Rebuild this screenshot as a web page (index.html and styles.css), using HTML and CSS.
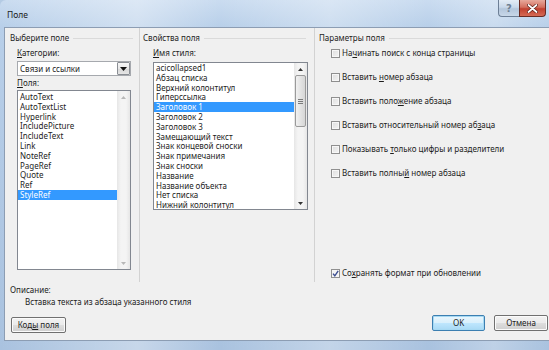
FILE: index.html
```html
<!DOCTYPE html>
<html lang="ru">
<head>
<meta charset="utf-8">
<title>Поле</title>
<link rel="stylesheet" href="styles.css">
</head>
<body>
<div class="window">
  <div class="titlebar">
    <span class="title">Поле</span>
    <div class="caption">
      <div class="cap-btn cap-help">?</div>
      <div class="cap-btn cap-close">
        <svg width="11" height="9" viewBox="0 0 11 9"><path d="M1.5 1 L9.5 8 M9.5 1 L1.5 8" stroke="#5a1a12" stroke-width="3.2" stroke-linecap="round"/><path d="M1.5 1 L9.5 8 M9.5 1 L1.5 8" stroke="#fff" stroke-width="1.8" stroke-linecap="round"/></svg>
      </div>
    </div>
  </div>
  <div class="client">
    <div class="columns">
      <section class="col col-left">
        <div class="group-title">Выберите поле</div>
        <div class="label"><u>К</u>атегории:</div>
        <div class="select">
          <span class="select-text">Связи и ссылки</span>
          <span class="select-btn"><svg width="7" height="4" viewBox="0 0 7 4"><path d="M0 0 H7 L3.5 4 Z" fill="#111"/></svg></span>
        </div>
        <div class="label label-gap"><u>П</u>оля:</div>
        <div class="list list-fields">
          <div class="items">
            <div class="item">AutoText</div>
            <div class="item">AutoTextList</div>
            <div class="item">Hyperlink</div>
            <div class="item">IncludePicture</div>
            <div class="item">IncludeText</div>
            <div class="item">Link</div>
            <div class="item">NoteRef</div>
            <div class="item">PageRef</div>
            <div class="item">Quote</div>
            <div class="item">Ref</div>
            <div class="item selected">StyleRef</div>
          </div>
          <div class="scrollbar disabled">
            <span class="arrow"><svg width="5" height="3" viewBox="0 0 5 3"><path d="M0 3 L2.5 0 L5 3 Z" fill="#b8b8b8"/></svg></span>
            <span class="track"></span>
            <span class="arrow"><svg width="5" height="3" viewBox="0 0 5 3"><path d="M0 0 L2.5 3 L5 0 Z" fill="#b8b8b8"/></svg></span>
          </div>
        </div>
      </section>
      <section class="col col-mid">
        <div class="group-title">Свойства поля</div>
        <div class="label label-mid"><u>И</u>мя стиля:</div>
        <div class="list list-styles">
          <div class="items">
            <div class="item">acicollapsed1</div>
            <div class="item">Абзац списка</div>
            <div class="item">Верхний колонтитул</div>
            <div class="item">Гиперссылка</div>
            <div class="item selected">Заголовок 1</div>
            <div class="item">Заголовок 2</div>
            <div class="item">Заголовок 3</div>
            <div class="item">Замещающий текст</div>
            <div class="item">Знак концевой сноски</div>
            <div class="item">Знак примечания</div>
            <div class="item">Знак сноски</div>
            <div class="item">Название</div>
            <div class="item">Название объекта</div>
            <div class="item">Нет списка</div>
            <div class="item">Нижний колонтитул</div>
          </div>
          <div class="scrollbar">
            <span class="arrow"><svg width="5" height="3" viewBox="0 0 5 3"><path d="M0 3 L2.5 0 L5 3 Z" fill="#333"/></svg></span>
            <span class="track">
              <span class="thumb"><span class="grip"></span></span>
            </span>
            <span class="arrow"><svg width="5" height="3" viewBox="0 0 5 3"><path d="M0 0 L2.5 3 L5 0 Z" fill="#333"/></svg></span>
          </div>
        </div>
      </section>
      <section class="col col-right">
        <div class="group-title">Параметры поля</div>
        <div class="options">
          <div class="check"><span class="box"></span><span>На<u>ч</u>инать поиск с конца страницы</span></div>
          <div class="check"><span class="box"></span><span>Вставить <u>н</u>омер абзаца</span></div>
          <div class="check"><span class="box"></span><span>Вставить поло<u>ж</u>ение абзаца</span></div>
          <div class="check"><span class="box"></span><span>Вставить относительный номер аб<u>з</u>аца</span></div>
          <div class="check"><span class="box"></span><span>Показывать <u>т</u>олько цифры и разделители</span></div>
          <div class="check"><span class="box"></span><span>Вставить полны<u>й</u> номер абзаца</span></div>
        </div>
        <div class="check check-last"><span class="box checked"><svg width="7" height="7" viewBox="0 0 7 7"><path d="M1 3.6 L2.8 5.8 L6.2 0.8" fill="none" stroke="#3d4f92" stroke-width="1.4"/></svg></span><span>Со<u>х</u>ранять формат при обновлении</span></div>
      </section>
    </div>
    <div class="desc-label">Описание:</div>
    <div class="desc-text">Вставка текста из абзаца указанного стиля</div>
    <div class="footer">
      <button class="btn btn-codes">Код<u>ы</u> поля</button>
      <div class="footer-right">
        <button class="btn btn-default">OK</button>
        <button class="btn">Отмена</button>
      </div>
    </div>
  </div>
</div>
</body>
</html>
```

FILE: styles.css
```css
* { box-sizing: border-box; }
html, body { margin: 0; padding: 0; }
body {
  width: 549px;
  height: 350px;
  overflow: hidden;
  font-family: "Noto Sans", "Open Sans", sans-serif;
  font-size: 8px;
  color: #1c1c1c;
  background: #b4cbe4;
}
u { text-decoration-thickness: 1px; text-underline-offset: 1px; }

.window {
  height: 350px;
  display: flex;
  flex-direction: column;
  padding: 0 0 9px 4px;
  background:
    linear-gradient(90deg, rgba(255,255,255,0) 0, rgba(255,255,255,0.35) 25%, rgba(255,255,255,0) 40%, rgba(255,255,255,0.3) 60%, rgba(255,255,255,0) 78%, rgba(255,255,255,0.25) 90%, rgba(255,255,255,0) 100%),
    linear-gradient(180deg, #cadcf0 0, #b8cfe9 27px, #a9c2df 100%);
  border-top-left-radius: 6px;
}

.titlebar {
  height: 27px;
  display: flex;
  align-items: flex-start;
}
.title {
  margin: 10px 0 0 3px;
  line-height: 10px;
  font-size: 8.5px;
  color: #1a1a1a;
}
.caption {
  margin-left: auto;
  margin-right: 3px;
  display: flex;
}
.cap-btn {
  height: 17px;
  border: 1px solid #6d7f96;
  border-top: none;
  display: flex;
  align-items: center;
  justify-content: center;
}
.cap-help {
  width: 21px;
  border-bottom-left-radius: 4px;
  border-right: none;
  background: linear-gradient(180deg, #e3ecf6 0, #c9d8ea 45%, #b3c6dc 55%, #c8d7e8 100%);
  color: #6e7f93;
  font-family: "DejaVu Sans", sans-serif;
  font-weight: bold;
  font-size: 10px;
}
.cap-close {
  width: 27px;
  border-bottom-right-radius: 4px;
  border-color: #6a2a22;
  background: linear-gradient(180deg, #e7a99c 0, #d4705f 45%, #c1402f 55%, #d56a55 100%);
}

.client {
  flex: 1;
  background: #f0f0f0;
  border: 1px solid #8c9db3;
  border-right: none;
  display: flex;
  flex-direction: column;
}

.columns {
  height: 254px;
  display: flex;
}
.col {
  display: flex;
  flex-direction: column;
  padding-top: 5px;
}
.col-left {
  width: 135px;
  padding-left: 5px;
  border-right: 1px solid #d2d2d2;
}
.col-mid {
  width: 175px;
  padding-left: 3px;
  border-right: 1px solid #d2d2d2;
}
.col-right {
  flex: 1;
  padding-left: 4px;
  padding-bottom: 4px;
}

.group-title {
  display: flex;
  align-items: center;
  gap: 4px;
  line-height: 10px;
  height: 10px;
  white-space: nowrap;
}
.group-title::after {
  content: "";
  flex: 1;
  height: 1px;
  margin-top: 1px;
  background: #dadada;
}
.col-left .group-title { margin-right: 6px; }
.col-mid .group-title { margin-right: 8px; }
.col-right .group-title { margin-right: 8px; }

.label {
  line-height: 10px;
  margin: 5px 0 0 7px;
}
.label-gap { margin-top: 2px; }
.label-mid { margin-left: 10px; }

.select {
  margin: 3px 0 0 7px;
  width: 114px;
  height: 15px;
  background: #fff;
  border: 1px solid #a6a9ae;
  display: flex;
  align-items: center;
}
.select-text {
  flex: 1;
  padding-left: 2px;
  line-height: 10px;
}
.select-btn {
  width: 13px;
  height: 13px;
  border: 1px solid #8a8e94;
  border-radius: 1px;
  background: linear-gradient(180deg, #f6f6f6 0, #e8e8e8 50%, #d8d8d8 51%, #e4e4e4 100%);
  display: flex;
  align-items: center;
  justify-content: center;
}

.list {
  background: #fff;
  border: 1px solid #828790;
  display: flex;
  overflow: hidden;
}
.list-fields {
  margin: 2px 0 0 7px;
  width: 114px;
  height: 180px;
}
.list-styles {
  margin: 4px 0 0 10px;
  width: 155px;
  height: 148px;
}
.items {
  flex: 1;
  min-width: 0;
  padding-top: 1px;
}
.list-styles .items { padding-top: 0; }
.item {
  line-height: 9.8px;
  height: 9.8px;
  padding-left: 2px;
  white-space: nowrap;
}
.item.selected {
  background: #3399ff;
  color: #fff;
}

.scrollbar {
  width: 13px;
  display: flex;
  flex-direction: column;
  background: linear-gradient(90deg, #e6e6e6 0, #f4f4f4 30%, #f4f4f4 70%, #e6e6e6 100%);
}
.scrollbar .arrow {
  height: 12px;
  display: flex;
  align-items: center;
  justify-content: center;
}
.scrollbar .track {
  flex: 1;
  display: flex;
  flex-direction: column;
}
.thumb {
  margin: 0 1px 0 1px;
  height: 52px;
  border: 1px solid #9a9a9a;
  border-radius: 2px;
  background: linear-gradient(90deg, #f1f1f1 0, #e3e3e3 50%, #d6d6d6 100%);
  display: flex;
  align-items: center;
  justify-content: center;
}
.grip {
  width: 5px;
  height: 5px;
  border-top: 1px solid #7a7a7a;
  border-bottom: 1px solid #7a7a7a;
  position: relative;
}
.grip::after {
  content: "";
  position: absolute;
  left: 0;
  right: 0;
  top: 1px;
  height: 1px;
  background: #7a7a7a;
}

.options {
  display: flex;
  flex-direction: column;
  gap: 14px;
  margin-top: 5px;
}
.check {
  display: flex;
  align-items: center;
  height: 10px;
  line-height: 10px;
  margin-left: 12px;
  white-space: nowrap;
}
.check-last { margin-top: auto; }
.box {
  width: 9px;
  height: 9px;
  margin-right: 2px;
  border: 1px solid #8f8f8f;
  background: linear-gradient(135deg, #dedede 0, #f4f4f4 100%);
  box-shadow: inset 0 0 0 1px #f7f7f7;
  display: flex;
  align-items: center;
  justify-content: center;
}
.box.checked {
  background: #f4f4f4;
}

.desc-label {
  margin: 3px 0 0 5px;
  line-height: 10px;
}
.desc-text {
  margin: 2px 0 0 20px;
  line-height: 10px;
}

.footer {
  margin-top: 8px;
  padding: 0 1px 0 6px;
  display: flex;
  align-items: flex-start;
}
.footer-right {
  margin-left: auto;
  display: flex;
  gap: 9px;
}
.btn {
  font-family: inherit;
  font-size: 8px;
  color: #1c1c1c;
  height: 16px;
  padding: 0;
  line-height: 10px;
  border: 1px solid #707070;
  border-radius: 2px;
  background: linear-gradient(180deg, #f2f2f2 0, #ebebeb 48%, #dddddd 52%, #cfcfcf 100%);
  box-shadow: inset 0 0 0 1px #fbfbfb;
}
.btn-codes {
  width: 55px;
  margin-top: 2px;
}
.footer-right .btn { width: 54px; }
.footer-right .btn-default {
  width: 53px;
  border-color: #3c7fb1;
  box-shadow: inset 0 0 0 1px #a6d9f3;
  background: linear-gradient(180deg, #eaf6fd 0, #d9f0fc 48%, #bee6fd 52%, #a7d9f5 100%);
}
```
